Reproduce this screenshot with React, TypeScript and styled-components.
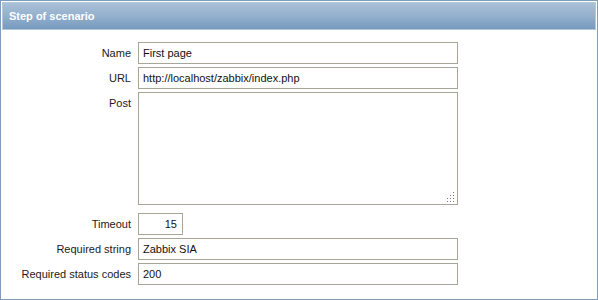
import React from "react";
import styled, { createGlobalStyle } from "styled-components";

const GlobalStyle = createGlobalStyle`
  html, body {
    margin: 0;
    padding: 0;
    background: #ffffff;
  }
  body {
    font-family: "Liberation Sans", Arial, sans-serif;
    font-size: 11px;
    color: #1a1a1a;
  }
`;

const Panel = styled.div`
  box-sizing: border-box;
  width: 598px;
  height: 300px;
  border: 1px solid #7f9cbd;
  padding: 1px;
  background: #ffffff;
`;

const Header = styled.div`
  box-sizing: border-box;
  height: 28px;
  border: 1px solid #b4c8dc;
  background: linear-gradient(to bottom, #a9c0d7 0%, #94b0cd 50%, #7699c0 100%);
  color: #ffffff;
  font-weight: bold;
  font-size: 11px;
  display: flex;
  align-items: center;
  padding-left: 6px;
`;

const Form = styled.div`
  display: grid;
  grid-template-columns: 129px auto;
  column-gap: 7px;
  row-gap: 3px;
  padding-top: 12px;
  align-items: start;
`;

const Label = styled.div`
  text-align: right;
  padding-top: 5px;
  line-height: 13px;
  white-space: nowrap;
`;

const Field = styled.div<{ $w: number; $h?: number; $right?: boolean }>`
  box-sizing: border-box;
  width: ${(p) => p.$w}px;
  height: ${(p) => p.$h ?? 22}px;
  border: 1px solid #a9a596;
  background: #ffffff;
  color: #111;
  padding: 0 5px 0 4px;
  line-height: 20px;
  text-align: ${(p) => (p.$right ? "right" : "left")};
  position: relative;
`;

const Grip = styled.svg`
  position: absolute;
  right: 2px;
  bottom: 2px;
`;

const Spacer = styled.div`
  grid-column: 1 / span 2;
  height: 2px;
`;

export default function App() {
  return (
    <>
      <GlobalStyle />
      <Panel>
        <Header>Step of scenario</Header>
        <Form>
          <Label>Name</Label>
          <Field $w={320}>First page</Field>
          <Label>URL</Label>
          <Field $w={320}>http://localhost/zabbix/index.php</Field>
          <Label>Post</Label>
          <Field $w={320} $h={113}>
            <Grip width="10" height="10" viewBox="0 0 10 10">
              {[
                [8, 0],
                [8, 3],
                [5, 3],
                [8, 6],
                [5, 6],
                [2, 6],
                [8, 9],
                [5, 9],
                [2, 9],
                [-1, 9],
              ].map(([x, y], i) => (
                <rect key={i} x={x} y={y} width="1" height="1" fill="#777" />
              ))}
            </Grip>
          </Field>
          <Spacer />
          <Label>Timeout</Label>
          <Field $w={45} $right>15</Field>
          <Label>Required string</Label>
          <Field $w={320}>Zabbix SIA</Field>
          <Label>Required status codes</Label>
          <Field $w={320}>200</Field>
        </Form>
      </Panel>
    </>
  );
}
